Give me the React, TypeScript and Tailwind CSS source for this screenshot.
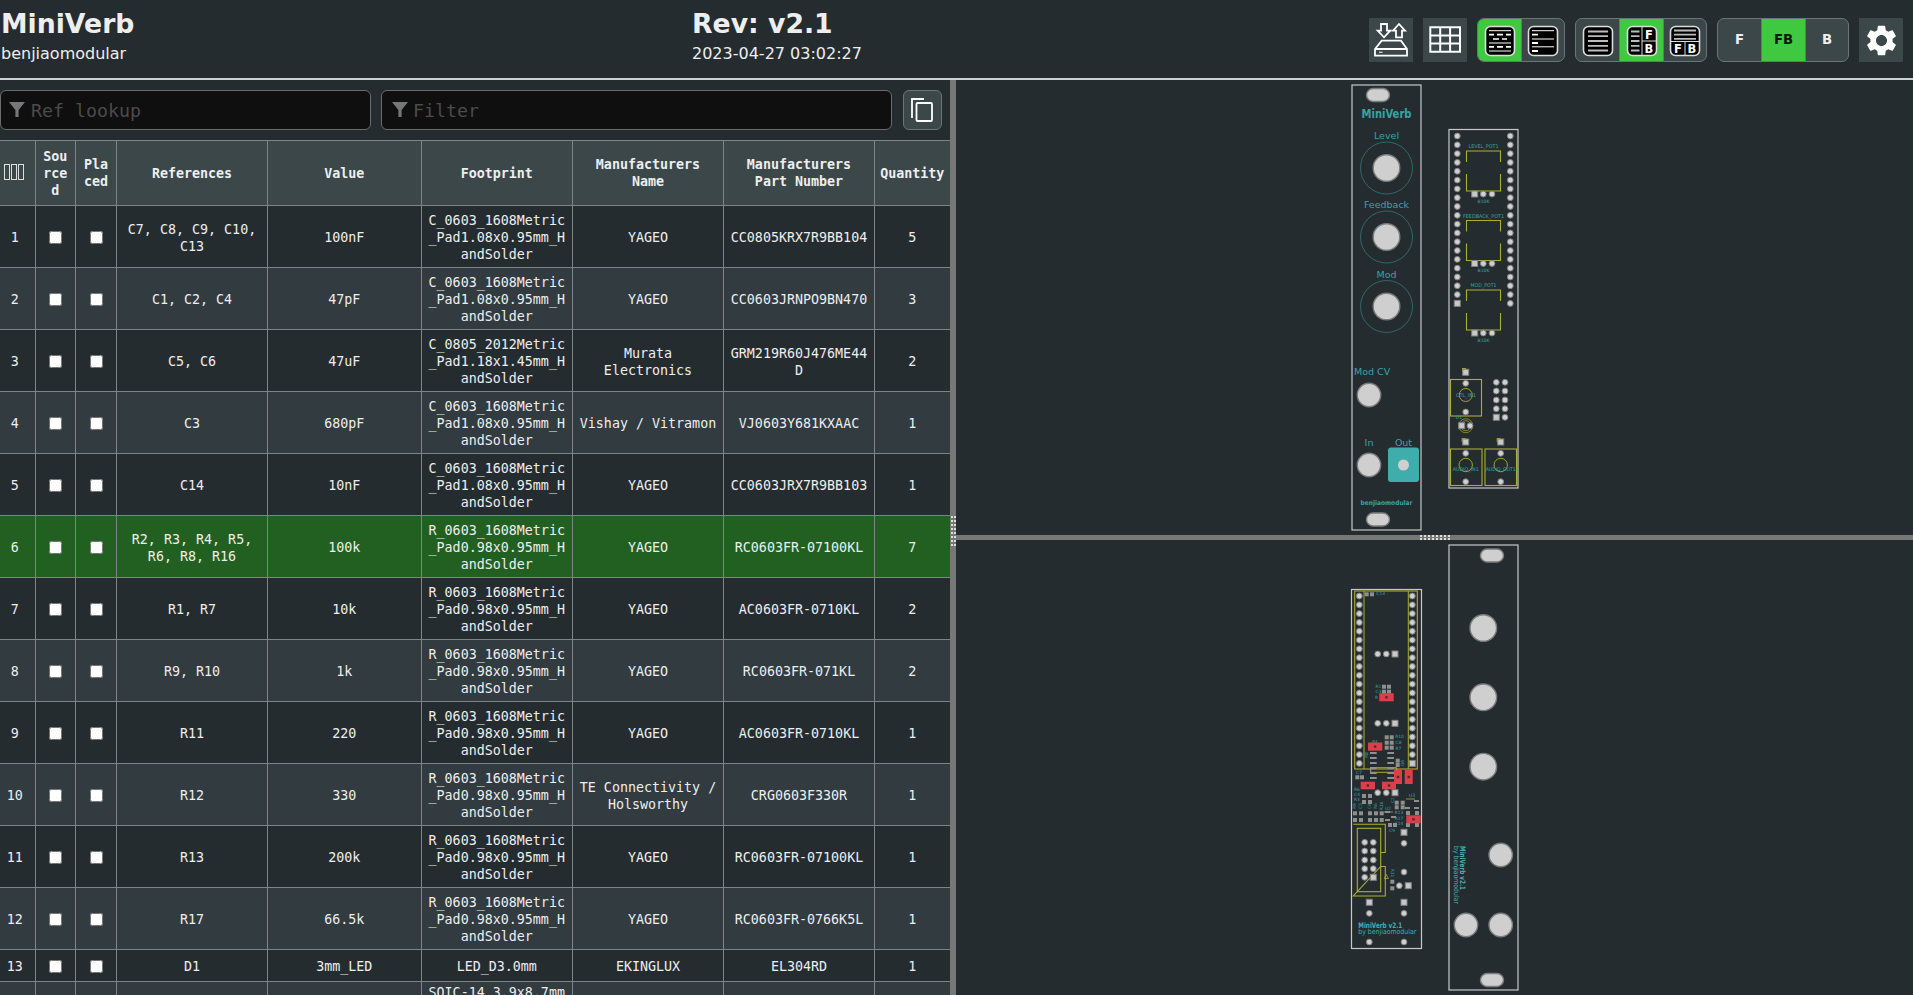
import React from "react";
import { MdSettings } from "react-icons/md";

const rows = [
    ["1", "C7, C8, C9, C10, C13", "100nF", "C_0603_1608Metric_Pad1.08x0.95mm_HandSolder", "YAGEO", "CC0805KRX7R9BB104", "5"],
    ["2", "C1, C2, C4", "47pF", "C_0603_1608Metric_Pad1.08x0.95mm_HandSolder", "YAGEO", "CC0603JRNPO9BN470", "3"],
    ["3", "C5, C6", "47uF", "C_0805_2012Metric_Pad1.18x1.45mm_HandSolder", "Murata Electronics", "GRM219R60J476ME44D", "2"],
    ["4", "C3", "680pF", "C_0603_1608Metric_Pad1.08x0.95mm_HandSolder", "Vishay / Vitramon", "VJ0603Y681KXAAC", "1"],
    ["5", "C14", "10nF", "C_0603_1608Metric_Pad1.08x0.95mm_HandSolder", "YAGEO", "CC0603JRX7R9BB103", "1"],
    ["6", "R2, R3, R4, R5, R6, R8, R16", "100k", "R_0603_1608Metric_Pad0.98x0.95mm_HandSolder", "YAGEO", "RC0603FR-07100KL", "7"],
    ["7", "R1, R7", "10k", "R_0603_1608Metric_Pad0.98x0.95mm_HandSolder", "YAGEO", "AC0603FR-0710KL", "2"],
    ["8", "R9, R10", "1k", "R_0603_1608Metric_Pad0.98x0.95mm_HandSolder", "YAGEO", "RC0603FR-071KL", "2"],
    ["9", "R11", "220", "R_0603_1608Metric_Pad0.98x0.95mm_HandSolder", "YAGEO", "AC0603FR-0710KL", "1"],
    ["10", "R12", "330", "R_0603_1608Metric_Pad0.98x0.95mm_HandSolder", "TE Connectivity / Holsworthy", "CRG0603F330R", "1"],
    ["11", "R13", "200k", "R_0603_1608Metric_Pad0.98x0.95mm_HandSolder", "YAGEO", "RC0603FR-07100KL", "1"],
    ["12", "R17", "66.5k", "R_0603_1608Metric_Pad0.98x0.95mm_HandSolder", "YAGEO", "RC0603FR-0766K5L", "1"],
    ["13", "D1", "3mm_LED", "LED_D3.0mm", "EKINGLUX", "EL304RD", "1"],
    ["", "", "", "SOIC-14_3.9x8.7mm", "", "", ""],
];

const colWidths = [35, 40.5, 41, 151, 153.5, 151.5, 151, 151, 75.5];
const headers = ["Sourced", "Placed", "References", "Value", "Footprint", "Manufacturers Name", "Manufacturers Part Number", "Quantity"];

const TEAL = "#38a3a5";
const YEL = "#adad30";

const Pad = ({ x, y, sq = false }: { x: number; y: number; sq?: boolean }) =>
    sq ? (
        <rect x={x - 3} y={y - 3} width={6} height={6} fill="#c8c8c8" stroke="#808080" strokeWidth={1} />
    ) : (
        <circle cx={x} cy={y} r={2.9} fill="#d0d0d0" stroke="#808080" strokeWidth={1} />
    );

const SmallPad = ({ x, y }: { x: number; y: number }) => <rect x={x - 2} y={y - 2} width={4} height={4} fill="#8f8f8f" />;

const Hole = ({ x, y, r }: { x: number; y: number; r: number }) => (
    <circle cx={x} cy={y} r={r} fill="#cfcfcf" stroke="#7c7c7c" strokeWidth={1.4} />
);

const Slot = ({ x, y }: { x: number; y: number }) => (
    <rect x={x - 11.5} y={y - 6.5} width={23} height={13} rx={6.5} fill="#cfcfcf" stroke="#7c7c7c" strokeWidth={1.4} />
);

const Silk = ({ x, y, t, size = 5, anchor = "middle", bold = false, fill = TEAL, rotate = 0, len }: { x: number; y: number; t: string; size?: number; anchor?: "middle" | "start"; bold?: boolean; fill?: string; rotate?: number; len?: number }) => (
    <text
        x={x}
        y={y}
        fontSize={size}
        fontWeight={bold ? 700 : 400}
        textAnchor={anchor}
        dominantBaseline="middle"
        fill={fill}
        fontFamily="'DejaVu Sans', sans-serif"
        transform={rotate ? `rotate(${rotate} ${x} ${y})` : undefined}
        textLength={len}
        lengthAdjust={len ? "spacingAndGlyphs" : undefined}
    >
        {t}
    </text>
);

const Red = ({ x, y, w, h }: { x: number; y: number; w: number; h: number }) => (
    <g>
        <rect x={x} y={y} width={w} height={h} fill="#d9404a" />
        <rect x={x + w / 2 - 1.2} y={y + h / 2 - 1.2} width={2.4} height={2.4} fill="#55282c" />
    </g>
);

const pinRows = (start: number) => Array.from({ length: 20 }, (_, i) => start + i * 8.81);

const FrontPcb = () => (
    <svg viewBox="956 80 957 455" className="block w-full h-full">
        {/* panel */}
        <rect x={1352} y={85} width={69} height={445} fill="none" stroke="#c8c8c8" strokeWidth={1.2} />
        <Slot x={1378} y={95} />
        <Slot x={1378} y={519.5} />
        <Silk x={1386.5} y={114} t="MiniVerb" size={12} bold len={50} />
        {[
            ["Level", 136, 168],
            ["Feedback", 205, 237],
            ["Mod", 275, 306.5],
        ].map(([label, ty, cy]) => (
            <g key={label as string}>
                <Silk x={1386.5} y={ty as number} t={label as string} size={9.5} />
                <circle cx={1386.5} cy={cy as number} r={26} fill="none" stroke={TEAL} strokeWidth={0.5} />
                <Hole x={1386.5} y={cy as number} r={13.3} />
            </g>
        ))}
        <Silk x={1354} y={372} t="Mod CV" size={9.5} anchor="start" />
        <Hole x={1369} y={395} r={11.7} />
        <Silk x={1369} y={443} t="In" size={9.5} />
        <Silk x={1403.5} y={443} t="Out" size={9.5} />
        <Hole x={1369} y={465} r={11.7} />
        <rect x={1388} y={447.5} width={31} height={34.5} rx={3} fill="#40adad" />
        <circle cx={1403.5} cy={465} r={5.5} fill="#cfcfcf" />
        <Silk x={1386.5} y={503.5} t="benjiaomodular" size={6.5} bold len={52} />

        {/* pcb */}
        <rect x={1449} y={129.5} width={69} height={358.5} fill="none" stroke="#c8c8c8" strokeWidth={1.2} />
        {pinRows(136).map((y, i) => (
            <g key={y}>
                <Pad x={1457.3} y={y} sq={i === 19} />
                <Pad x={1510.3} y={y} />
            </g>
        ))}
        {[
            ["LEVEL_POT1", 0, 30],
            ["FEEDBACK_POT1", 69.5, 41],
            ["MOD_POT1", 139, 26],
        ].map(([label, d, len]) => {
            const o = d as number;
            return (
                <g key={label as string}>
                    <Silk x={1483.5} y={147 + o} t={label as string} size={5} len={len as number} />
                    <path
                        d={`M1466.5 ${162 + o}V${151 + o}H1500.5V${162 + o}M1466.5 ${174 + o}V${191 + o}H1500.5V${174 + o}`}
                        fill="none"
                        stroke={YEL}
                        strokeWidth={1.1}
                    />
                    <Pad x={1474.7} y={194 + o} sq />
                    <Pad x={1483.3} y={194 + o} />
                    <Pad x={1492} y={194 + o} />
                    <Silk x={1483.5} y={201.7 + o} t="B10K" size={4.6} />
                </g>
            );
        })}
        <path d="M1462 368h4v4h-4z" fill={YEL} />
        <Pad x={1465.7} y={372.3} sq />
        <rect x={1450.5} y={379.5} width={31} height={36.5} fill="none" stroke={YEL} strokeWidth={1.1} />
        <circle cx={1465.7} cy={395} r={6.5} fill="none" stroke={YEL} strokeWidth={0.9} />
        <Pad x={1465.7} y={383.3} />
        <Pad x={1465.7} y={412} />
        <Silk x={1466} y={396} t="CTL_IN1" size={5} len={20} />
        <Silk x={1459} y={418} t="D1" size={4.6} />
        <circle cx={1465.7} cy={425.7} r={7} fill="none" stroke={YEL} strokeWidth={0.7} />
        <circle cx={1465.7} cy={425.7} r={5} fill="none" stroke={YEL} strokeWidth={0.7} />
        <Pad x={1461.7} y={425.7} sq />
        <Pad x={1470} y={425.7} />
        {[382.3, 391, 400, 408.7, 417.3].map((y, i) => (
            <g key={y}>
                <Pad x={1496.3} y={y} sq={i === 4} />
                <Pad x={1505} y={y} />
            </g>
        ))}
        {[
            [1465.7, 1450.5, "AUDIO_IN1", 26],
            [1500.7, 1485, "AUDIO_OUT1", 30],
        ].map(([cx, rx, label, len]) => (
            <g key={label as string}>
                <path d={`M${(cx as number) - 4} 438h4v4h-4z`} fill={YEL} />
                <Pad x={cx as number} y={442} sq />
                <rect x={rx as number} y={449} width={31.5} height={36.5} fill="none" stroke={YEL} strokeWidth={1.1} />
                <circle cx={cx as number} cy={465} r={6.7} fill="none" stroke={YEL} strokeWidth={0.9} />
                <Pad x={cx as number} y={453.3} />
                <Pad x={cx as number} y={481.7} />
                <Silk x={cx as number} y={470} t={label as string} size={5} len={len as number} />
            </g>
        ))}
    </svg>
);

const smallPads: [number, number][] = [
    [1366.7, 594.3], [1372, 594.3], [1357.3, 777.3], [1362, 777.3],
    [1384, 686.7], [1389, 686.7], [1384, 691.7], [1389, 691.7],
    [1386.7, 737.3], [1391.7, 737.3], [1386.7, 742.7], [1391.7, 742.7], [1386.7, 747.7], [1391.7, 747.7],
    [1397.7, 760.7], [1397.7, 765],
    [1396.7, 802.7], [1402.7, 802.7], [1396.7, 807.3], [1402.7, 807.3],
    [1355, 813.3], [1361, 813.3], [1370, 813.3], [1376, 813.3], [1381.7, 813.3],
    [1355, 820], [1361, 820], [1370, 820], [1376, 820], [1381.7, 820],
    [1390, 825], [1395, 825],
    [1408, 813], [1417, 813], [1408, 825], [1417, 825],
    [1392.3, 881.7], [1392.3, 888.3],
    [1364, 796], [1370, 796], [1364, 802], [1370, 802],
];

const icBars = [0, 5, 10, 15, 20, 25];

const BackPcb = () => (
    <svg viewBox="956 540 957 455" className="block w-full h-full">
        {/* pcb */}
        <rect x={1351.5} y={589.5} width={70} height={359} fill="none" stroke="#c8c8c8" strokeWidth={1.2} />
        <rect x={1354.7} y={591} width={62.6} height={178} fill="none" stroke={YEL} strokeWidth={1.1} />
        <path d="M1364 591V769M1408.3 591V769M1370.7 767.7H1396.7V772.3H1370.7Z" fill="none" stroke={YEL} strokeWidth={1} />
        {pinRows(596).map((y, i) => (
            <g key={y}>
                <Pad x={1359.3} y={y} />
                <Pad x={1412.3} y={y} sq={i === 19} />
            </g>
        ))}
        {[654, 723.3, 792.7].map((y) => (
            <g key={y}>
                <Pad x={1377.7} y={y} />
                <Pad x={1386.3} y={y} />
                <Pad x={1395} y={y} sq />
            </g>
        ))}
        {icBars.map((d) => (
            <g key={d}>
                <rect x={1370} y={752 + d} width={6.7} height={2} fill="#8f8f8f" />
                <rect x={1387.3} y={752 + d} width={6.7} height={2} fill="#8f8f8f" />
            </g>
        ))}
        {smallPads.map(([x, y]) => (
            <SmallPad key={`${x}-${y}`} x={x} y={y} />
        ))}
        <Red x={1379.3} y={693.3} w={14.4} h={8} />
        <Red x={1368} y={742.5} w={14.3} h={8.2} />
        <Red x={1394} y={770} w={8} h={14} />
        <Red x={1404.7} y={770} w={8} h={14} />
        <Red x={1360.7} y={781.7} w={14.3} h={7.6} />
        <Red x={1382} y={781.7} w={14} h={7.6} />
        <Red x={1406.3} y={815.3} w={14.4} h={8} />
        <Silk x={1380.7} y={594} t="C13" size={4.4} />
        <Silk x={1359} y={772.5} t="C7" size={4.4} />
        <Silk x={1378.5} y={686.5} t="R1" size={4.4} />
        <Silk x={1378.5} y={691.5} t="C3" size={4.4} />
        <Silk x={1376.5} y={697.5} t="R" size={4.4} />
        <Silk x={1399.5} y={737} t="R10" size={4.4} />
        <Silk x={1398.5} y={742.5} t="C8" size={4.4} />
        <Silk x={1398.5} y={748.5} t="R7" size={4.4} />
        <Silk x={1375} y={741.5} t="R4" size={4} />
        <Silk x={1366.5} y={755} t="R8" size={4.4} rotate={-90} />
        <Silk x={1402.5} y={763} t="Q6" size={4.4} rotate={-90} />
        <Silk x={1357} y={790} t="R6" size={4.4} />
        <Silk x={1357} y={795} t="C4" size={4.4} />
        <Silk x={1357} y={800} t="R3" size={4.4} />
        <Silk x={1392.5} y={800} t="C2" size={4} rotate={-90} />
        <Silk x={1412} y={796} t="U3" size={4.6} />
        <path d="M1406 799h9" stroke={YEL} strokeWidth={0.8} />
        <rect x={1414} y={800} width={5} height={2} fill="#8f8f8f" />
        <rect x={1414} y={807} width={5} height={2} fill="#8f8f8f" />
        <rect x={1405} y={807} width={5} height={2} fill="#8f8f8f" />
        <Silk x={1355} y={806} t="R9" size={4.4} rotate={-90} />
        <Silk x={1361} y={806} t="C5" size={4.4} rotate={-90} />
        <Silk x={1370} y={806} t="C6" size={4.4} rotate={-90} />
        <Silk x={1376} y={806} t="R6" size={4.4} rotate={-90} />
        <Silk x={1381.5} y={806} t="R16" size={4.4} rotate={-90} />
        <Silk x={1388} y={809} t="U2" size={4.4} />
        <path d="M1384 812h9" stroke={YEL} strokeWidth={0.8} />
        <rect x={1385} y={811} width={5} height={2} fill="#8f8f8f" />
        <rect x={1391} y={816} width={5} height={2} fill="#8f8f8f" />
        <rect x={1385} y={819} width={5} height={2} fill="#8f8f8f" />
        <Silk x={1399} y={813} t="R13" size={4.4} />
        <Silk x={1399} y={819} t="R17" size={4.4} />
        <Silk x={1399} y={824} t="C14" size={4.4} />
        <Silk x={1392} y={831} t="C9" size={4.4} />
        {/* connector */}
        <path d="M1353.3 824.3H1385.3V852.5H1380.7M1380.7 866.5H1385.3V896H1353.3Z" fill="none" stroke={YEL} strokeWidth={1.1} />
        <rect x={1357.3} y={828.3} width={23.4} height={63.4} fill="none" stroke={YEL} strokeWidth={1.1} />
        {[842.3, 851, 860, 868.7, 877.3].map((y, i) => (
            <g key={y}>
                <Pad x={1364.7} y={y} />
                <Pad x={1373.3} y={y} sq={i === 4} />
            </g>
        ))}
        <Pad x={1404} y={832.3} sq />
        <Pad x={1404} y={843.3} />
        <Pad x={1404} y={872} />
        <Pad x={1399.3} y={885.7} />
        <Pad x={1408.3} y={885.7} sq />
        <Silk x={1392.5} y={873} t="R11" size={4.4} rotate={90} />
        <path d="M1388.3 878.5l-2 -4l-2 4z" fill="none" stroke={YEL} strokeWidth={0.8} />
        {[1369.3, 1404].map((x) => (
            <g key={x}>
                <Pad x={x} y={902.3} sq />
                <Pad x={x} y={913.3} />
                <Pad x={x} y={942} />
            </g>
        ))}
        <Silk x={1358.3} y={925.5} t="MiniVerb v2.1" size={7.5} anchor="start" len={44} fill="#3fb0b2" bold />
        <Silk x={1358.3} y={932} t="by benjiaomodular" size={7} anchor="start" len={58} fill="#3fb0b2" />

        {/* panel */}
        <rect x={1449} y={545} width={69} height={445} fill="none" stroke="#c8c8c8" strokeWidth={1.2} />
        <Slot x={1492} y={555.5} />
        <Slot x={1492} y={980} />
        <Hole x={1483.3} y={628} r={13.3} />
        <Hole x={1483.3} y={697.3} r={13.3} />
        <Hole x={1483.3} y={766.7} r={13.3} />
        <Hole x={1500.7} y={855} r={11.7} />
        <Hole x={1466} y={925} r={11.7} />
        <Hole x={1500.7} y={925} r={11.7} />
        <Silk x={1462.5} y={846} t="MiniVerb v2.1" size={7.5} anchor="start" rotate={90} len={44} fill="#3fb0b2" bold />
        <Silk x={1455.7} y={846} t="by benjiaomodular" size={7} anchor="start" rotate={90} len={58} fill="#3fb0b2" />
    </svg>
);

const LayoutFrame = ({ children }: { children: React.ReactNode }) => (
    <svg viewBox="0 0 44 44" className="w-[44px] h-[44px] block shrink-0">
        <rect x={7.5} y={7.5} width={29} height={29} rx={5} fill="#000" stroke="#ddd" strokeWidth={1.6} />
        {children}
    </svg>
);

const SvgLetter = ({ x, y, t }: { x: number; y: number; t: string }) => (
    <text x={x} y={y} fontSize={11.5} fontWeight={700} textAnchor="middle" fill="#fff" fontFamily="'DejaVu Sans', sans-serif">
        {t}
    </text>
);

const GroupedIcon = () => (
    <LayoutFrame>
        <path d="M11 11.7H33M11 24H33M11 32H33" stroke="#fff" strokeWidth={1} />
        <path d="M11 15.7H16M19 15.7H25M28 15.7H33M15 20H21M24 20H29M11 27.8H16M19 27.8H25M28 27.8H33" stroke="#fff" strokeWidth={1.7} />
    </LayoutFrame>
);

const UngroupedIcon = () => (
    <LayoutFrame>
        <path d="M11 11.7H33M11 20H33M11 27.8H33" stroke="#fff" strokeWidth={1} />
        <path d="M11 15.7H17M11 24H17M11 32H17" stroke="#fff" strokeWidth={1.8} />
    </LayoutFrame>
);

const BomOnlyIcon = () => (
    <LayoutFrame>
        <path d="M12 12.5H32M12 17.2H32M12 22H32M12 26.8H32M12 31.5H32" stroke="#bbb" strokeWidth={1.8} />
    </LayoutFrame>
);

const LeftRightIcon = () => (
    <LayoutFrame>
        <path d="M11 12.5H19.5M11 17.2H19.5M11 22H19.5M11 26.8H19.5M11 31.5H19.5" stroke="#bbb" strokeWidth={1.8} />
        <path d="M22 8V36M22 22H36" stroke="#ddd" strokeWidth={1} />
        <SvgLetter x={29} y={19.5} t="F" />
        <SvgLetter x={29} y={33.5} t="B" />
    </LayoutFrame>
);

const TopBottomIcon = () => (
    <LayoutFrame>
        <path d="M11 11.5H33M11 15.7H33M11 19.8H33" stroke="#bbb" strokeWidth={1.8} />
        <path d="M8 22.5H36M22 22.5V36" stroke="#ddd" strokeWidth={1} />
        <SvgLetter x={15} y={33.7} t="F" />
        <SvgLetter x={29} y={33.7} t="B" />
    </LayoutFrame>
);

const Funnel = ({ className }: { className: string }) => (
    <svg viewBox="0 0 16 15" className={className}>
        <path d="M0 0H16L9.6 8V15H6.4V8Z" fill="#777" />
    </svg>
);

const FilterInput = ({ placeholder, width, funnel, pad }: { placeholder: string; width: string; funnel: string; pad: string }) => (
    <div className={`relative h-[40px] ${width}`}>
        <Funnel className={`absolute ${funnel} top-[12px] w-[16px] h-[15px]`} />
        <input
            placeholder={placeholder}
            className={`w-full h-full ${pad} rounded-[6px] border border-[#6b6b6b] bg-[#0f0f0f] text-[18.3px] outline-none placeholder:text-[#4b4b4b] font-['DejaVu_Sans_Mono',monospace]`}
        />
    </div>
);

const cellBorder = "border border-[#7f8587] px-[5px] py-0 text-center align-middle leading-[17px] [overflow-wrap:anywhere]";
const dataCell = "border border-[#7f8587] px-[5px] pt-[2px] pb-0 text-center leading-[17px] [overflow-wrap:anywhere]";
const numberCell = "border border-l-0 border-[#7f8587] pl-0 pr-[5px] pt-[2px] pb-0 text-center align-middle leading-[17px]";

const App = () => {
    return (
        <div className="w-[1913px] h-[995px] overflow-hidden bg-[#252c30] text-[#eee] font-['DejaVu_Sans',sans-serif]">
            <header className="h-[80px] border-b-2 border-[#cfcfcf] flex">
                <div className="w-[692px] pl-[1px] pt-[8px]">
                    <div className="text-[26.7px] font-bold leading-[32px]">MiniVerb</div>
                    <div className="text-[16px] leading-[19px] mt-[4px]">benjiaomodular</div>
                </div>
                <div className="pt-[8px]">
                    <div className="text-[26.7px] font-bold leading-[32px]">Rev: v2.1</div>
                    <div className="text-[16px] leading-[19px] mt-[4px]">2023-04-27 03:02:27</div>
                </div>
                <div className="ml-auto pr-[10px] pt-[18px] flex gap-[10px] items-start">
                    <button className="w-[44px] h-[44px] bg-[#3b4749]">
                        <svg viewBox="0 0 44 44" className="w-[44px] h-[44px] block" fill="none" stroke="#fff" strokeWidth={1.8}>
                            <path d="M12 6H18V12.7H21.3L15 19.3L8.7 12.7H12Z" />
                            <path d="M30 6L36 12.7H33V19.3H27V12.7H24Z" />
                            <path d="M12.7 22.7H32L38 31V37.7H6V31ZM6 31H38" />
                            <path d="M10 34.2H13.5" strokeWidth={1} />
                        </svg>
                    </button>
                    <button className="w-[44px] h-[44px] bg-[#3b4749]">
                        <svg viewBox="0 0 44 44" className="w-[44px] h-[44px] block" fill="none" stroke="#fff" strokeWidth={2}>
                            <path d="M7.3 9.3H37V33.7H7.3ZM17.2 9.3V33.7M27.1 9.3V33.7M7.3 17.4H37M7.3 25.6H37" />
                        </svg>
                    </button>
                    <div className="flex w-[88px] h-[44px] border border-[#6b7476] rounded-[7px] overflow-hidden bg-[#3b4749]">
                        <div className="w-[44px] flex justify-center bg-[#41c841] border-r border-[#6b7476]"><GroupedIcon /></div>
                        <div className="w-[42px] flex justify-center"><UngroupedIcon /></div>
                    </div>
                    <div className="flex w-[132px] h-[44px] border border-[#6b7476] rounded-[7px] overflow-hidden bg-[#3b4749]">
                        <div className="w-[44px] flex justify-center border-r border-[#6b7476]"><BomOnlyIcon /></div>
                        <div className="w-[44px] flex justify-center bg-[#41c841] border-r border-[#6b7476]"><LeftRightIcon /></div>
                        <div className="w-[42px] flex justify-center"><TopBottomIcon /></div>
                    </div>
                    <div className="flex w-[132px] h-[44px] border border-[#6b7476] rounded-[7px] overflow-hidden bg-[#3b4749] text-[13.3px] font-bold">
                        <div className="w-[44px] flex items-center justify-center border-r border-[#6b7476]">F</div>
                        <div className="w-[44px] flex items-center justify-center bg-[#41c841] text-[#0a1a0a] border-r border-[#6b7476]">FB</div>
                        <div className="w-[42px] flex items-center justify-center">B</div>
                    </div>
                    <button className="w-[44px] h-[44px] bg-[#3b4749] flex items-center justify-center">
                        <MdSettings size={37} color="#fff" />
                    </button>
                </div>
            </header>
            <div className="flex h-[915px]">
                <div className="w-[950px] overflow-hidden">
                    <div className="h-[60px] pt-[10px] flex font-['DejaVu_Sans_Mono',monospace]">
                        <FilterInput placeholder="Ref lookup" width="w-[371px]" funnel="left-[9px]" pad="pl-[30px]" />
                        <div className="w-[10px]" />
                        <FilterInput placeholder="Filter" width="w-[511px]" funnel="left-[11px]" pad="pl-[31px]" />
                        <button className="ml-[11px] w-[39px] h-[40px] rounded-[6px] border border-[#6b7476] bg-[#3b4749] flex items-center justify-center">
                            <svg viewBox="0 0 22 24" className="w-[22px] h-[24px] -translate-x-[1px]" fill="none" stroke="#fff" strokeWidth={1.8}>
                                <path d="M1 20V1H13" />
                                <rect x={5.5} y={5} width={15.5} height={18} rx={1} />
                            </svg>
                        </button>
                    </div>
                    <table className="table-fixed border-collapse w-[950px] text-[13.33px] font-['DejaVu_Sans_Mono',monospace]">
                        <colgroup>
                            {colWidths.map((w, i) => (
                                <col key={i} style={{ width: w }} />
                            ))}
                        </colgroup>
                        <thead>
                            <tr className="h-[65px] bg-[#3b4749]">
                                <th className="border border-l-0 border-[#7f8587] pl-[4px] pr-0 pb-[2px] text-left align-middle">
                                    <span className="inline-flex gap-[1px] align-middle">
                                        <span className="block w-[6px] h-[16px] border border-[#ddd]" />
                                        <span className="block w-[6px] h-[16px] border border-[#ddd]" />
                                        <span className="block w-[6px] h-[16px] border border-[#ddd]" />
                                    </span>
                                </th>
                                {headers.map((h) => (
                                    <th key={h} className={`${cellBorder} font-bold`}>{h}</th>
                                ))}
                            </tr>
                        </thead>
                        <tbody>
                            {rows.map((r, i) => {
                                const bg = r[0] === "6" ? "bg-[#226022]" : i % 2 === 1 ? "bg-[#313b40]" : "bg-[#252c30]";
                                const last = r[0] === "";
                                return (
                                    <tr key={i} className={`${bg} ${r[0] === "13" ? "h-[32px]" : "h-[62px]"}`}>
                                        <td className={numberCell}>{r[0]}</td>
                                        <td className={cellBorder}><input type="checkbox" className="align-middle" /></td>
                                        <td className={cellBorder}><input type="checkbox" className="align-middle" /></td>
                                        {r.slice(1).map((c, j) => (
                                            <td key={j} className={`${dataCell} ${last ? "align-top" : "align-middle"}`}>{c}</td>
                                        ))}
                                    </tr>
                                );
                            })}
                        </tbody>
                    </table>
                </div>
                <div className="w-[6px] bg-[#777] flex items-center justify-center">
                    <div className="grid grid-cols-2 gap-x-[1px] gap-y-[2px] -translate-y-[7px]">
                        {Array.from({ length: 16 }, (_, i) => (
                            <span key={i} className="block w-[2px] h-[2px] bg-[#ddd]" />
                        ))}
                    </div>
                </div>
                <div className="flex-1 flex flex-col min-w-0">
                    <div className="h-[455px]"><FrontPcb /></div>
                    <div className="h-[5px] bg-[#777] flex items-center pl-[464px]">
                        <div className="grid grid-rows-2 grid-flow-col gap-y-[1px] gap-x-[2px]">
                            {Array.from({ length: 16 }, (_, i) => (
                                <span key={i} className="block w-[2px] h-[2px] bg-[#ddd]" />
                            ))}
                        </div>
                    </div>
                    <div className="h-[455px]"><BackPcb /></div>
                </div>
            </div>
        </div>
    );
};

export default App;
